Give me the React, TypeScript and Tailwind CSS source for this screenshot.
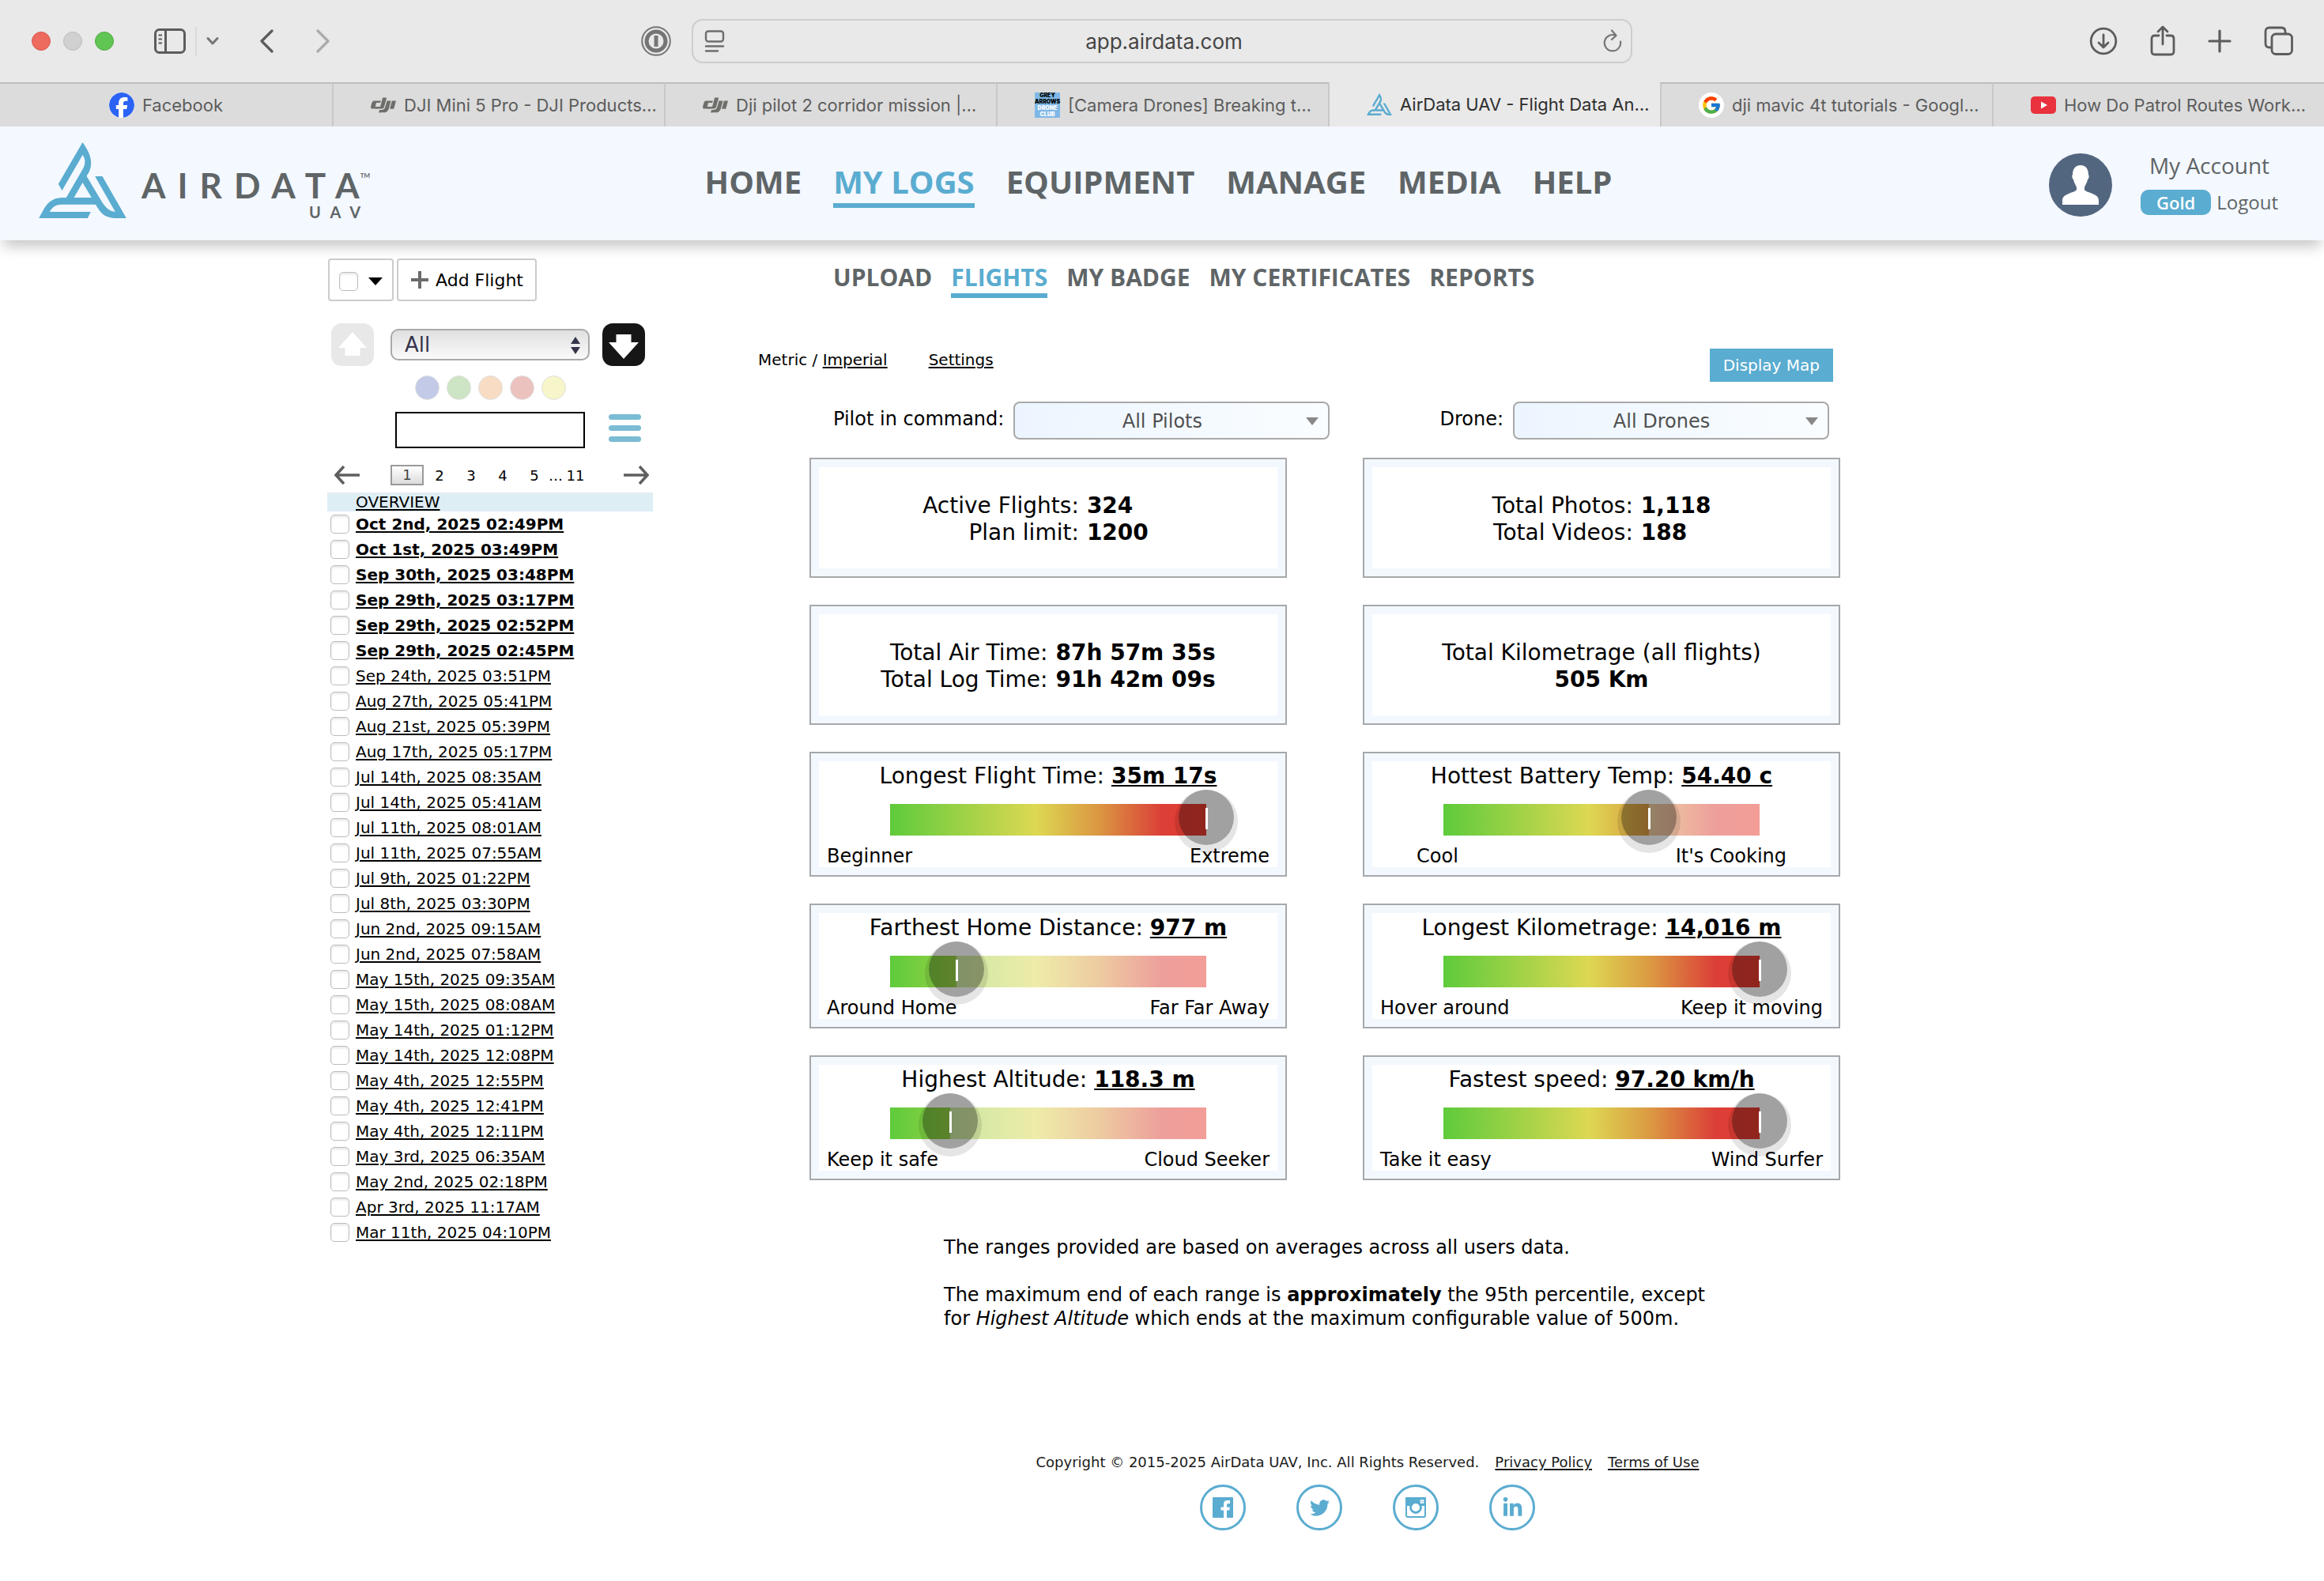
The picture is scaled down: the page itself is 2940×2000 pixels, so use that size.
import { FaTwitter, FaLinkedinIn } from 'react-icons/fa'
import { FcGoogle } from 'react-icons/fc'
import { SiDji, SiFacebook } from 'react-icons/si'
import clsx from 'clsx'

const tabs = [
  { icon: 'facebook', label: 'Facebook' },
  { icon: 'dji', label: 'DJI Mini 5 Pro - DJI Products…' },
  { icon: 'dji', label: 'Dji pilot 2 corridor mission |…' },
  { icon: 'club', label: '[Camera Drones] Breaking t…' },
  { icon: 'airdata', label: 'AirData UAV - Flight Data An…', active: true },
  { icon: 'google', label: 'dji mavic 4t tutorials - Googl…' },
  { icon: 'youtube', label: 'How Do Patrol Routes Work…' },
]

const mainNav = ['HOME', 'MY LOGS', 'EQUIPMENT', 'MANAGE', 'MEDIA', 'HELP']
const subNav = ['UPLOAD', 'FLIGHTS', 'MY BADGE', 'MY CERTIFICATES', 'REPORTS']

const tagColors = [
  { name: 'Blue', color: 'bg-[#c2cae8]' },
  { name: 'Green', color: 'bg-[#cde5c4]' },
  { name: 'Orange', color: 'bg-[#f8dcc3]' },
  { name: 'Red', color: 'bg-[#ebc2be]' },
  { name: 'Yellow', color: 'bg-[#f7f6ca]' },
]

const flights = [
  { date: 'Oct 2nd, 2025 02:49PM', unread: true },
  { date: 'Oct 1st, 2025 03:49PM', unread: true },
  { date: 'Sep 30th, 2025 03:48PM', unread: true },
  { date: 'Sep 29th, 2025 03:17PM', unread: true },
  { date: 'Sep 29th, 2025 02:52PM', unread: true },
  { date: 'Sep 29th, 2025 02:45PM', unread: true },
  { date: 'Sep 24th, 2025 03:51PM' },
  { date: 'Aug 27th, 2025 05:41PM' },
  { date: 'Aug 21st, 2025 05:39PM' },
  { date: 'Aug 17th, 2025 05:17PM' },
  { date: 'Jul 14th, 2025 08:35AM' },
  { date: 'Jul 14th, 2025 05:41AM' },
  { date: 'Jul 11th, 2025 08:01AM' },
  { date: 'Jul 11th, 2025 07:55AM' },
  { date: 'Jul 9th, 2025 01:22PM' },
  { date: 'Jul 8th, 2025 03:30PM' },
  { date: 'Jun 2nd, 2025 09:15AM' },
  { date: 'Jun 2nd, 2025 07:58AM' },
  { date: 'May 15th, 2025 09:35AM' },
  { date: 'May 15th, 2025 08:08AM' },
  { date: 'May 14th, 2025 01:12PM' },
  { date: 'May 14th, 2025 12:08PM' },
  { date: 'May 4th, 2025 12:55PM' },
  { date: 'May 4th, 2025 12:41PM' },
  { date: 'May 4th, 2025 12:11PM' },
  { date: 'May 3rd, 2025 06:35AM' },
  { date: 'May 2nd, 2025 02:18PM' },
  { date: 'Apr 3rd, 2025 11:17AM' },
  { date: 'Mar 11th, 2025 04:10PM' },
]

const gauges = [
  { title: 'Longest Flight Time', value: '35m 17s', percent: 100, low: 'Beginner', high: 'Extreme' },
  { title: 'Hottest Battery Temp', value: '54.40 c', percent: 65, low: 'Cool', high: "It's Cooking", inset: true },
  { title: 'Farthest Home Distance', value: '977 m', percent: 21, low: 'Around Home', high: 'Far Far Away' },
  { title: 'Longest Kilometrage', value: '14,016 m', percent: 100, low: 'Hover around', high: 'Keep it moving' },
  { title: 'Highest Altitude', value: '118.3 m', percent: 19, low: 'Keep it safe', high: 'Cloud Seeker' },
  { title: 'Fastest speed', value: '97.20 km/h', percent: 100, low: 'Take it easy', high: 'Wind Surfer' },
]

const checkbox =
  'size-6 shrink-0 appearance-none rounded-[5px] border border-[#bdbdbd] bg-white shadow-[inset_0_2px_3px_rgba(0,0,0,0.1)]'
const link = 'underline decoration-2 underline-offset-2'

function LogoMark({ className }: { className?: string }) {
  return (
    <svg viewBox="27 33 332 288" className={className} fill="#5aacd0" fillRule="evenodd" aria-hidden="true">
      <path d="M193 33C213 62 225 85 225 110C225 135 217 148 208 161L242 218L268 262C282 284 298 296 317 297L240 162H268L359 321H318C285 321 266 308 251 283L242 269H112C88 270 76 281 68 297H224L212 321H27L47 284C65 256 85 244 115 243H131L193 136C203 118 206 98 193 81L115 216L101 191ZM193 186L160 243H227Z" />
    </svg>
  )
}

function TabIcon({ name }: { name: string }) {
  if (name === 'facebook') {
    return <SiFacebook className="size-8 shrink-0 rounded-full bg-white text-[#2b63f5]" />
  }
  if (name === 'dji') {
    return <SiDji className="size-8 shrink-0 text-[#6e6e6b]" />
  }
  if (name === 'club') {
    return (
      <span className="flex size-8 shrink-0 flex-col items-center justify-center bg-[#7fb8e6] text-[7px] leading-[8px] font-black text-white">
        <span className="text-black">GREY</span>
        <span className="text-black">ARROWS</span>
        <span>DRONE</span>
        <span>CLUB</span>
      </span>
    )
  }
  if (name === 'airdata') {
    return <LogoMark className="h-7 w-8 shrink-0" />
  }
  if (name === 'google') {
    return (
      <span className="flex size-8 shrink-0 items-center justify-center rounded-full bg-white">
        <FcGoogle className="size-[26px]" />
      </span>
    )
  }
  return (
    <svg viewBox="0 0 32 32" className="size-8 shrink-0" aria-hidden="true">
      <rect y="5" width="32" height="22" rx="5" fill="#e9323e" />
      <path d="M13 11.5L21 16L13 20.5Z" fill="#fff" />
    </svg>
  )
}

function BrowserToolbar() {
  return (
    <div className="grid h-[104px] grid-cols-[1fr_minmax(0,1190px)_1fr] items-center bg-[#e9e9e9] text-[#5c5c5c]">
      <div className="flex items-center pr-[26px] pl-10">
        <div className="flex gap-4">
          <span className="size-6 rounded-full border border-[#d9584d] bg-[#ed6a5e]" />
          <span className="size-6 rounded-full border border-[#bcbcbc] bg-[#d0d0d0]" />
          <span className="size-6 rounded-full border border-[#52ab43] bg-[#61c554]" />
        </div>
        <button type="button" aria-label="Show sidebar" className="ml-[51px]">
          <svg viewBox="0 0 40 32" className="h-8 w-10" fill="none" stroke="currentColor" strokeWidth="3">
            <rect x="1.5" y="1.5" width="37" height="29" rx="5" />
            <path d="M14.5 2V30" />
            <path d="M5.5 8.5H10M5.5 13.5H10M5.5 18.5H10" strokeWidth="2" />
          </svg>
        </button>
        <span className="ml-3 h-9 w-0.5 bg-[#dadada]" />
        <button type="button" aria-label="Tab groups" className="ml-3">
          <svg viewBox="0 0 16 12" className="h-3 w-4" fill="none" stroke="#757575" strokeWidth="3" strokeLinecap="round" strokeLinejoin="round">
            <path d="M2 2.5L8 9L14 2.5" />
          </svg>
        </button>
        <button type="button" aria-label="Back" className="ml-[51px]">
          <svg viewBox="0 0 18 30" className="h-[30px] w-[18px]" fill="none" stroke="currentColor" strokeWidth="3.2" strokeLinecap="round" strokeLinejoin="round">
            <path d="M16 2L3 15L16 28" />
          </svg>
        </button>
        <button type="button" aria-label="Forward" className="ml-[54px]">
          <svg viewBox="0 0 18 30" className="h-[30px] w-[18px]" fill="none" stroke="#ababab" strokeWidth="3.2" strokeLinecap="round" strokeLinejoin="round">
            <path d="M2 2L15 15L2 28" />
          </svg>
        </button>
        <button type="button" aria-label="Passwords" className="ml-auto">
          <svg viewBox="0 0 38 38" className="size-[38px]" fill="none" stroke="#757575">
            <circle cx="19" cy="19" r="17.8" strokeWidth="2" />
            <circle cx="19" cy="19" r="12" strokeWidth="5" />
            <path d="M19 12V26" strokeWidth="5" />
          </svg>
        </button>
      </div>
      <div className="flex h-14 items-center rounded-[14px] border-2 border-[#cdcdcd] pr-[11px] pl-[14px]">
        <svg viewBox="0 0 26 28" className="h-7 w-[26px]" fill="none" stroke="#6e6e6e" strokeWidth="2.4" strokeLinecap="round">
          <rect x="2" y="1.5" width="22" height="13" rx="3" />
          <path d="M2 20.5H24M2 26.5H17" />
        </svg>
        <input
          type="text"
          aria-label="Address"
          defaultValue="app.airdata.com"
          className="min-w-0 flex-1 bg-transparent text-center text-[26px] text-[#454545] outline-none"
        />
        <button type="button" aria-label="Reload">
          <svg viewBox="0 0 24 30" className="h-[30px] w-6" fill="none" stroke="#757575" strokeWidth="2.2" strokeLinecap="round" strokeLinejoin="round">
            <path d="M22 15.5A10.2 10.2 0 1 1 16 7.9" />
            <path d="M11 1.5L16.5 7.9L11 13" />
          </svg>
        </button>
      </div>
      <div className="flex items-center justify-end gap-[41px] pr-[38px]">
        <button type="button" aria-label="Downloads">
          <svg viewBox="0 0 36 36" className="size-9" fill="none" stroke="currentColor" strokeWidth="2.8" strokeLinecap="round" strokeLinejoin="round">
            <circle cx="18" cy="18" r="15.8" />
            <path d="M18 10V25.5M12 20L18 26L24 20" />
          </svg>
        </button>
        <button type="button" aria-label="Share">
          <svg viewBox="0 0 32 40" className="h-10 w-8" fill="none" stroke="currentColor" strokeWidth="2.8" strokeLinecap="round" strokeLinejoin="round">
            <path d="M11 13H6Q2 13 2 17V33Q2 37 6 37H26Q30 37 30 33V17Q30 13 26 13H21" />
            <path d="M16 24V2.5M10 8L16 2L22 8" />
          </svg>
        </button>
        <button type="button" aria-label="New tab">
          <svg viewBox="0 0 30 30" className="size-[30px]" fill="none" stroke="currentColor" strokeWidth="3.2" strokeLinecap="round">
            <path d="M15 2V28M2 15H28" />
          </svg>
        </button>
        <button type="button" aria-label="Tab overview">
          <svg viewBox="0 0 38 38" className="size-[38px]" fill="none" stroke="currentColor" strokeWidth="2.8">
            <path d="M10 27H7Q2 27 2 22V7Q2 2 7 2H22Q27 2 27 7V10" />
            <rect x="10" y="10" width="25.5" height="25.5" rx="5" />
          </svg>
        </button>
      </div>
    </div>
  )
}

function TabBar() {
  return (
    <div className="grid h-14 grid-cols-7 bg-[#dcdcdc]">
      {tabs.map((tab, idx) => (
        <button
          key={tab.label}
          type="button"
          className={clsx(
            'flex min-w-0 items-center gap-2.5 text-[22px] whitespace-nowrap',
            idx === 0 ? 'justify-center' : 'border-l-2 border-[#c8c8c8] pl-[47px]',
            tab.active ? 'bg-[#e9e9e9] text-[#2e2e2e]' : 'border-t-2 border-t-[#bdbdbd] text-[#5c5c5c]',
          )}
        >
          <TabIcon name={tab.icon} />
          {tab.label}
        </button>
      ))}
    </div>
  )
}

function SiteHeader() {
  return (
    <header className="relative grid h-36 grid-cols-[1fr_auto_1fr] items-center bg-[#f4f8ff] pr-[58px] pl-[49px] font-['Open_Sans',sans-serif] text-[#5f6567] shadow-[0_12px_16px_-4px_rgba(0,0,0,0.22)]">
      <a href="#home" className="flex items-start gap-[19px] pb-1.5">
        <LogoMark className="h-24 w-[111px]" />
        <span className="flex flex-col gap-0.5 pt-8 font-['Lato',sans-serif]">
          <span className="flex items-start text-[44px] leading-[44px] font-bold tracking-[15px]">
            AIRDATA
            <span className="-ml-3.5 text-[8px] leading-[20px] tracking-normal">TM</span>
          </span>
          <span className="self-end text-[20px] leading-[20px] font-bold tracking-[12px]">UAV</span>
        </span>
      </a>
      <nav className="flex gap-10 pt-0.5 text-[40px] leading-[54px] font-bold">
        {mainNav.map((item) => (
          <a
            key={item}
            href="#nav"
            className={clsx('border-b-6', item === 'MY LOGS' ? 'border-[#5aacd0] text-[#5aacd0]' : 'border-transparent')}
          >
            {item}
          </a>
        ))}
      </nav>
      <div className="flex items-center justify-end gap-9">
        <svg viewBox="0 0 80 80" className="mt-1 size-20" aria-hidden="true">
          <circle cx="40" cy="40" r="40" fill="#52667f" />
          <path
            d="M40 15C47 15 50 20 50 27C51 28 51 32 49 33C48 38 46 40 45 43V46C47 49 52 49 57 52C62 54 63 57 63 60V65H17V60C17 57 18 54 23 52C28 49 33 49 35 46V43C34 40 32 38 31 33C29 32 29 28 30 27C30 20 33 15 40 15Z"
            fill="#fff"
          />
        </svg>
        <div className="flex flex-col items-center gap-[3px]">
          <a href="#account" className="text-[28px] leading-[44px]">My Account</a>
          <div className="flex h-11 items-center gap-[7px]">
            <span className="rounded-[10px] bg-[#5aacd0] px-5 text-[22px] leading-8 font-semibold text-white">Gold</span>
            <a href="#logout" className="text-[24px]">Logout</a>
          </div>
        </div>
      </div>
    </header>
  )
}

function Sidebar() {
  return (
    <aside className="w-[412px] shrink-0 pt-[23px]">
      <div className="flex gap-1 pl-px">
        <div className="flex h-[54px] w-[83px] items-center gap-[13px] rounded border-2 border-[#ccc] pt-1 pl-3">
          <input type="checkbox" aria-label="Select all flights" className={checkbox} />
          <button type="button" aria-label="Selection menu">
            <svg viewBox="0 0 18 10" className="h-2.5 w-[18px]"><path d="M0 0H18L9 10Z" /></svg>
          </button>
        </div>
        <button type="button" className="flex h-[54px] items-center gap-2 rounded border-2 border-[#ccc] px-[15px] text-[22px]">
          <svg viewBox="0 0 24 24" className="size-6" stroke="#6b6b6b" strokeWidth="4"><path d="M12 1V23M1 12H23" /></svg>
          Add Flight
        </button>
      </div>

      <div className="mt-7 flex items-center pr-2.5 pl-[5px]">
        <button type="button" aria-label="Previous flight">
          <svg viewBox="0 0 54 54" className="size-[54px]">
            <rect width="54" height="54" rx="13" fill="#e8e8e8" />
            <path d="M27 11L45 31H36.5V41H17.5V31H9Z" fill="#fff" />
          </svg>
        </button>
        <div className="relative mr-4 ml-[21px] flex-1">
          <select
            aria-label="Flight filter"
            className="h-10 w-full appearance-none rounded-[10px] border-2 border-[#a9a9a9] bg-linear-to-b from-[#e0e0e0] to-[#fafafa] pl-4 text-[26px] leading-8 text-[#34344a]"
          >
            <option>All</option>
          </select>
          <svg viewBox="0 0 12 22" className="pointer-events-none absolute top-2.5 right-3 h-[22px] w-3" fill="#34344a">
            <path d="M6 0L12 9H0ZM6 22L0 13H12Z" />
          </svg>
        </div>
        <button type="button" aria-label="Next flight">
          <svg viewBox="0 0 54 54" className="size-[54px]">
            <rect width="54" height="54" rx="13" fill="#161616" />
            <path d="M27 45L8 24H17.5V14H36.5V24H46Z" fill="#fff" />
          </svg>
        </button>
      </div>

      <div className="mt-3 flex justify-center gap-[9px]">
        {tagColors.map((tag) => (
          <button
            key={tag.name}
            type="button"
            aria-label={tag.name}
            className={clsx('size-[31px] rounded-full border border-[#e0e0e0]', tag.color)}
          />
        ))}
      </div>

      <div className="mt-[15px] flex items-start gap-[30px] pl-[86px]">
        <input type="text" aria-label="Search flights" className="h-[46px] w-60 border-2 border-black px-2 text-[22px]" />
        <button type="button" aria-label="Menu" className="flex w-[41px] flex-col gap-[7px] pt-[3px]">
          <span className="h-[7px] rounded-sm bg-[#7bbcd5]" />
          <span className="h-[7px] rounded-sm bg-[#7bbcd5]" />
          <span className="h-[7px] rounded-sm bg-[#7bbcd5]" />
        </button>
      </div>

      <div className="mt-[21px] flex h-[26px] items-center pr-[5px] pl-[9px] text-[18px]">
        <button type="button" aria-label="Previous page">
          <svg viewBox="0 0 32 24" className="h-6 w-8" fill="none" stroke="#5f5f5f" strokeWidth="3.5">
            <path d="M12 1L2 12L12 23M2 12H32" />
          </svg>
        </button>
        <button type="button" className="ml-[39px] h-[26px] w-[42px] border-2 border-[#9a9a9a] bg-linear-to-b from-white to-[#dcdcdc] leading-none text-[#444]">
          1
        </button>
        {['2', '3', '4', '5'].map((page) => (
          <button key={page} type="button" className="w-10">{page}</button>
        ))}
        <span className="-ml-0.5">…</span>
        <button type="button" className="w-8">11</button>
        <button type="button" aria-label="Next page" className="ml-auto">
          <svg viewBox="0 0 32 24" className="h-6 w-8" fill="none" stroke="#5f5f5f" strokeWidth="3.5">
            <path d="M20 1L30 12L20 23M0 12H30" />
          </svg>
        </button>
      </div>

      <div className="mt-[9px] bg-[#deeef5] pl-9 text-[20px] leading-6">
        <a href="#overview" className={link}>OVERVIEW</a>
      </div>
      <ul className="pl-1 text-[20px] leading-[34px]">
        {flights.map((flight) => (
          <li key={flight.date} className="flex h-8 items-center gap-2">
            <input type="checkbox" aria-label={flight.date} className={checkbox} />
            <a href="#flight" className={clsx(link, flight.unread && 'font-bold')}>{flight.date}</a>
          </li>
        ))}
      </ul>
    </aside>
  )
}

function Filter({ id, label, value }: { id: string; label: string; value: string }) {
  return (
    <div className="flex items-start gap-3">
      <label htmlFor={id} className="leading-[44px]">{label}</label>
      <div className="relative w-[400px]">
        <select
          id={id}
          className="h-12 w-full appearance-none rounded-lg border-2 border-[#a9a9a9] bg-linear-to-r from-[#ecf5ff] to-[#fafdff] pt-0.5 pr-9 pl-3 text-center text-[#505050]"
        >
          <option>{value}</option>
        </select>
        <svg viewBox="0 0 16 10" className="pointer-events-none absolute top-5 right-3.5 h-2.5 w-4" fill="#888">
          <path d="M0 0H16L8 10Z" />
        </svg>
      </div>
    </div>
  )
}

const statCard =
  'flex h-[152px] flex-col items-center justify-center border-2 border-[#a6a9ab] bg-white pt-[3px] text-[28px] leading-[34px] shadow-[inset_0_0_0_10px_#f3f8ff]'

function StatCard({ stats, className }: { stats: string[][]; className?: string }) {
  return (
    <section className={statCard}>
      <dl className={clsx('grid grid-cols-[auto_auto] gap-x-2.5', className)}>
        {stats.map(([label, value]) => (
          <div key={label} className="contents">
            <dt className="text-right">{label}:</dt>
            <dd className="font-bold">{value}</dd>
          </div>
        ))}
      </dl>
    </section>
  )
}

function GaugeCard({ gauge }: { gauge: (typeof gauges)[number] }) {
  return (
    <section className="h-[158px] border-2 border-[#a6a9ab] bg-white p-2.5 text-center shadow-[inset_0_0_0_10px_#f3f8ff]">
      <h2 className="text-[28px] leading-[38px]">
        {gauge.title}:{' '}
        <a href="#flight" className={clsx(link, 'font-bold')}>{gauge.value}</a>
      </h2>
      <div
        role="meter"
        aria-label={gauge.title}
        aria-valuenow={gauge.percent}
        aria-valuemin={0}
        aria-valuemax={100}
        className="relative mx-auto mt-4 flex h-10 w-[400px] justify-end bg-[linear-gradient(to_right,#5ecb3b,#ddd852_46%,#db9742_66%,#db3f38_86%,#e63b2e)]"
      >
        <div className="bg-white/50" style={{ width: `${100 - gauge.percent}%` }} />
        <div
          className="absolute -top-[18px] -ml-[35px] flex size-[70px] justify-center rounded-full bg-black/37 pt-[23px] shadow-[0_5px_0_5px_rgba(0,0,0,0.1)]"
          style={{ left: `${gauge.percent}%` }}
        >
          <span className="h-[27px] w-[3px] bg-white" />
        </div>
      </div>
      <div className={clsx('relative mt-3 flex justify-between text-[24px] leading-[29px]', gauge.inset ? 'px-14' : 'px-2.5')}>
        <span>{gauge.low}</span>
        <span>{gauge.high}</span>
      </div>
    </section>
  )
}

const socialButton =
  'flex size-[58px] items-center justify-center rounded-full border-[3px] border-[#5aacd0] text-[#5aacd0]'

function Footer() {
  return (
    <footer className="mt-[155px] flex flex-col items-center pl-[108px] text-[18px] leading-6 text-[#1a1a1a]">
      <div className="flex gap-5">
        <span>Copyright © 2015-2025 AirData UAV, Inc. All Rights Reserved.</span>
        <a href="#privacy" className={link}>Privacy Policy</a>
        <a href="#terms" className={link}>Terms of Use</a>
      </div>
      <div className="mt-4 flex gap-16">
        <a href="#facebook" aria-label="Facebook" className={socialButton}>
          <svg viewBox="0 0 26 26" className="size-[26px]" fill="currentColor">
            <path d="M1 0H25Q26 0 26 1V25Q26 26 25 26H18V16.5H21.5V12.5H18V10Q18 8 20 8H22V4H18.5Q14 4 14 8.5V12.5H10.5V16.5H14V26H1Q0 26 0 25V1Q0 0 1 0Z" />
          </svg>
        </a>
        <a href="#twitter" aria-label="Twitter" className={socialButton}>
          <FaTwitter className="size-[25px]" />
        </a>
        <a href="#instagram" aria-label="Instagram" className={socialButton}>
          <svg viewBox="0 0 26 26" className="size-[26px]" fill="none" stroke="currentColor" strokeWidth="2">
            <rect x="1" y="1" width="24" height="24" rx="2" />
            <path d="M1 1H25V10H1Z" fill="currentColor" />
            <circle cx="13" cy="13" r="6.5" fill="#fff" strokeWidth="2.8" />
            <rect x="19.5" y="4" width="3" height="3" stroke="#fff" strokeWidth="1.5" />
          </svg>
        </a>
        <a href="#linkedin" aria-label="LinkedIn" className={socialButton}>
          <FaLinkedinIn className="size-[27px]" />
        </a>
      </div>
    </footer>
  )
}

export default function App() {
  return (
    <div className="min-h-screen bg-white font-['DejaVu_Sans',Verdana,sans-serif] text-black">
      <div className="font-['Inter',sans-serif]">
        <BrowserToolbar />
        <TabBar />
      </div>
      <SiteHeader />
      <div className="mx-auto flex w-full max-w-[2112px]">
        <Sidebar />
        <main className="min-w-0 flex-1 pt-[27px]">
          <nav className="flex gap-6 pl-[228px] font-['Open_Sans',sans-serif] text-[30px] leading-10 font-bold text-[#5f6567]">
            {subNav.map((item) => (
              <a
                key={item}
                href="#subnav"
                className={clsx('border-b-6', item === 'FLIGHTS' ? 'border-[#5aacd0] text-[#5aacd0]' : 'border-transparent')}
              >
                {item}
              </a>
            ))}
          </nav>

          <div className="mt-16 flex items-start pr-[207px] pl-[133px] text-[20px] leading-7">
            <span>
              Metric / <a href="#imperial" className={link}>Imperial</a>
            </span>
            <a href="#settings" className={clsx(link, 'ml-[52px]')}>Settings</a>
            <button type="button" className="ml-auto h-[42px] bg-[#5aacd0] px-[17px] text-white">Display Map</button>
          </div>

          <div className="mt-[25px] flex justify-between pr-[212px] pl-[228px] text-[24px]">
            <Filter id="pilot" label="Pilot in command:" value="All Pilots" />
            <Filter id="drone" label="Drone:" value="All Drones" />
          </div>

          <div className="mx-auto mt-[23px] grid max-w-[1304px] grid-cols-2 gap-x-[96px] gap-y-[34px]">
            <StatCard className="pr-8" stats={[['Active Flights', '324'], ['Plan limit', '1200']]} />
            <StatCard stats={[['Total Photos', '1,118'], ['Total Videos', '188']]} />
            <StatCard stats={[['Total Air Time', '87h 57m 35s'], ['Total Log Time', '91h 42m 09s']]} />
            <section className={statCard}>
              <h2>Total Kilometrage (all flights)</h2>
              <strong>505 Km</strong>
            </section>
            {gauges.map((gauge) => (
              <GaugeCard key={gauge.title} gauge={gauge} />
            ))}
          </div>

          <div className="mt-[70px] ml-[368px] flex max-w-[990px] flex-col gap-[30px] text-[24px] leading-[30px]">
            <p>The ranges provided are based on averages across all users data.</p>
            <p>
              The maximum end of each range is <strong>approximately</strong> the 95th percentile, except
              <br />
              for <em>Highest Altitude</em> which ends at the maximum configurable value of 500m.
            </p>
          </div>

          <Footer />
        </main>
      </div>
    </div>
  )
}
